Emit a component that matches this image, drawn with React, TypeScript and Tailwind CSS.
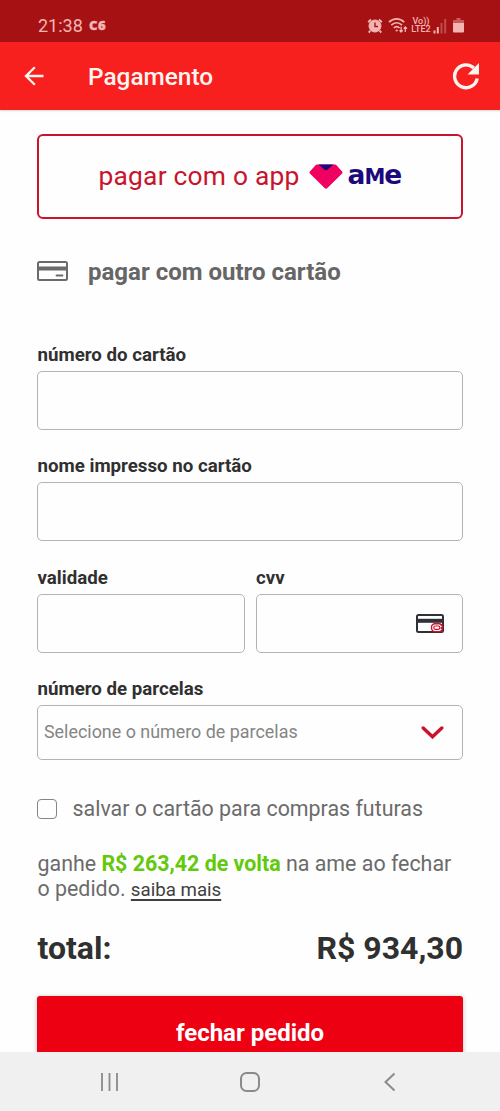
import type { ReactNode } from "react";

function StatusBar() {
  return (
    <div className="flex h-[42px] items-center bg-[#a61214] pt-[9px] pr-[36px] pl-[38px] text-[#f4b5b2]">
      <span className="w-[45px] text-[18px] leading-[22px]">21:38</span>
      <span className="mb-[2px] ml-[6px] font-['Open_Sans',sans-serif] text-[13px] leading-[20px] font-extrabold tracking-[0.500px] [-webkit-text-stroke:0.400px_#f4b5b2]">C6</span>
      <div className="ml-auto flex items-center">
        <svg className="h-4 w-4" viewBox="0 0 16 16" fill="none" stroke="currentColor">
          <circle cx="8" cy="8" r="6" fill="currentColor" />
          <path d="M1.200 4.200 4 1.500M12 1.500l2.800 2.700M3.400 12.500 1.800 14.600M12.600 12.500l1.600 2.100" strokeWidth="1.900" />
          <path d="M8 4.500V8.500H11" stroke="#a61214" strokeWidth="1.400" />
        </svg>
        <svg className="ml-[5px] h-[17px] w-5" viewBox="0 0 20 17" fill="none" stroke="currentColor" strokeWidth="1.700">
          <path d="M1 5.200C5.300.800 12 .800 16.200 5.200M3.300 8.200C6.500 5 10.800 5 14 8.200M5.800 11C7.600 9.200 9.800 9.200 11.500 11" />
          <circle cx="8.700" cy="13.500" r="1.100" fill="currentColor" stroke="none" />
          <path d="M13.100 9.800v5M11.500 13.200l1.600 1.800 1.600-1.800M17.300 15V10M15.700 11.800l1.600-1.800 1.600 1.800" strokeWidth="1.300" />
        </svg>
        <div className="mt-[-1px] ml-[3px] flex w-[20px] flex-col items-center text-[9px] leading-[8px] font-medium">
          <span>Vo))</span>
          <span>LTE2</span>
        </div>
        <svg className="ml-[2px] h-4 w-[14px]" viewBox="0 0 14 16" fill="currentColor">
          <rect x="0.500" y="12.500" width="2" height="3" />
          <rect x="3.800" y="9" width="2" height="6.500" />
          <rect x="7.500" y="5" width="2" height="10.500" opacity=".35" />
          <rect x="11.200" y="1" width="2" height="14.500" opacity=".35" />
        </svg>
        <svg className="ml-[6px] h-[15px] w-[11px]" viewBox="0 0 11 15" fill="currentColor">
          <path d="M3.500 0h4v2H11v3H0V2h3.500z" opacity=".45" />
          <path d="M0 5h11v8.500a1 1 0 0 1-1 1H1a1 1 0 0 1-1-1z" />
        </svg>
      </div>
    </div>
  );
}

function AppBar() {
  return (
    <header className="flex h-[68px] shrink-0 items-center bg-[#f81f1f] pr-[20px] pl-[24px] text-[#fff5f0] shadow-[0_1px_2px_rgba(0,0,0,0.15)]">
      <svg className="h-5 w-5" viewBox="0 0 20 20" fill="none" stroke="currentColor" strokeWidth="2.300">
        <path d="M19.500 10H2M10.800 1.200 2 10l8.800 8.800" />
      </svg>
      <h1 className="ml-[44px] pt-[2px] text-[24.400px] leading-[30px] font-medium">Pagamento</h1>
      <svg className="ml-auto h-[28px] w-[28px]" viewBox="0 0 28 28" fill="none" stroke="currentColor" strokeWidth="3.400">
        <path d="M25.200 16.500A11.400 11.400 0 1 1 21.800 6" />
        <path d="M27 1v11.500H15.500z" fill="currentColor" stroke="none" />
      </svg>
    </header>
  );
}

function AmeLogo() {
  return (
    <span className="flex items-center">
      <svg className="h-[25px] w-[34px]" viewBox="0 0 34 25">
        <path d="M8 .500h18a2 2 0 0 1 1.500.700l5.600 6.300a1.500 1.500 0 0 1 0 2L18.400 24a2 2 0 0 1-2.800 0L.900 9.500a1.500 1.500 0 0 1 0-2l5.600-6.300A2 2 0 0 1 8 .500z" fill="#f0005f" />
        <path d="M9.500.500h15l-5.800 5a2.500 2.500 0 0 1-3.400 0z" fill="#1c0a7d" />
      </svg>
      <span className="mb-px ml-[4px] flex w-[54px] items-baseline font-['DejaVu_Sans',sans-serif] text-[26.500px] leading-[30px] font-bold tracking-[-1px] text-[#1c0a7d]">
        <span>a</span>
        <span className="text-[21px] uppercase">m</span>
        <span>e</span>
      </span>
    </span>
  );
}

function Field({ label, children }: { label: string; children?: ReactNode }) {
  return (
    <label className="flex min-w-0 flex-1 flex-col">
      <span className="pl-[0.500px] text-[18.700px] leading-[22px] font-bold text-[#303030]">{label}</span>
      <span className="mt-[5px] flex h-[59px] items-center justify-end rounded-[5px] border border-[#b3b3b3] pr-[18px]">{children}</span>
    </label>
  );
}

export default function App() {
  return (
    <div className="flex h-[1111px] w-[500px] flex-col overflow-hidden bg-[#fefefe] font-[Roboto,sans-serif]">
      <StatusBar />
      <AppBar />
      <main className="flex min-h-0 flex-1 flex-col overflow-hidden px-[37px] pt-[24px]">
        <button className="flex h-[85px] shrink-0 items-center justify-center rounded-[6px] border-2 border-[#c8142c]">
          <span className="mb-[2px] text-[26.400px] leading-[30px] tracking-[0.200px] text-[#c8142c]">pagar com o app</span>
          <span className="ml-[10px]"><AmeLogo /></span>
        </button>

        <div className="mt-[38px] flex h-[30px] shrink-0 items-center">
          <svg className="mb-[3px] h-5 w-[31px]" viewBox="0 0 31 20" fill="none" stroke="#6b6b6b">
            <rect x="1" y="1" width="29" height="18" rx="1.500" strokeWidth="2" />
            <path d="M1 7.500h29" strokeWidth="4" />
            <path d="M19.500 14.500h6" strokeWidth="1.800" strokeLinecap="round" />
          </svg>
          <h2 className="ml-[20px] text-[24px] leading-[30px] font-bold text-[#666]">pagar com outro cartão</h2>
        </div>

        <form className="mt-[57px] flex shrink-0 flex-col">
          <Field label="número do cartão" />
          <div className="mt-[25px] flex"><Field label="nome impresso no cartão" /></div>
          <div className="mt-[25.500px] flex gap-[11px]">
            <Field label="validade" />
            <Field label="cvv">
              <svg className="h-[19px] w-7" viewBox="0 0 28 19" fill="none">
                <rect x="1" y="1" width="26" height="17" rx="1.500" stroke="#303038" strokeWidth="2" />
                <path d="M1 6.800h26" stroke="#303038" strokeWidth="4" />
                <rect x="15.500" y="9.800" width="11" height="7.800" rx="3.500" fill="#fff" stroke="#c8142c" strokeWidth="1.400" />
                <rect x="17.800" y="12" width="6" height="3.300" rx="1.500" stroke="#c8142c" strokeWidth="1.200" />
                <path d="M25.500 10v8" stroke="#c8142c" strokeWidth="1.800" strokeDasharray="2 1" />
              </svg>
            </Field>
          </div>
          <div className="mt-[25.500px] flex flex-col">
            <span className="pl-[0.500px] text-[18.700px] leading-[22px] font-bold text-[#303030]">número de parcelas</span>
            <div className="mt-[5px] flex h-[55px] items-center justify-between rounded-[5px] border border-[#b3b3b3] pr-[18px] pl-[6px]">
              <span className="mb-[2px] text-[17.900px] leading-[22px] text-[#858585]">Selecione o número de parcelas</span>
              <svg className="h-[13px] w-[23px]" viewBox="0 0 23 13" fill="none" stroke="#c8142c" strokeWidth="3.400" strokeLinecap="round">
                <path d="m2.200 2 9.300 8.800L20.800 2" />
              </svg>
            </div>
          </div>
        </form>

        <div className="mt-[36px] flex h-[26px] shrink-0 items-center">
          <span className="h-[20px] w-[20px] rounded-[4px] border-[1.500px] border-[#858585]" />
          <span className="ml-[15.500px] text-[21.400px] leading-[26px] text-[#6b6b6b]">salvar o cartão para compras futuras</span>
        </div>

        <p className="mt-[29px] h-[51px] shrink-0 pl-[0.500px] text-[21.400px] leading-[25px] whitespace-nowrap text-[#6b6b6b]">
          ganhe <strong className="font-bold text-[#63c90c]">R$ 263,42 de volta</strong> na ame ao fechar
          <br />
          o pedido. <span className="text-[18.700px] leading-[20px] text-[#404040] underline decoration-[1.500px] underline-offset-[3px]">saiba mais</span>
        </p>

        <div className="mt-[26px] flex h-[40px] shrink-0 items-center justify-between text-[32px] leading-[40px] font-bold text-[#303030]">
          <span className="pl-[0.500px]">total:</span>
          <span>R$ 934,30</span>
        </div>

        <button className="mt-[28px] flex h-[73px] shrink-0 items-center justify-center rounded-[3px] bg-[#ec0012] text-[24px] leading-[30px] font-bold text-white shadow-[0_1px_5px_rgba(0,0,0,0.25)]">
          fechar pedido
        </button>
      </main>
      <nav className="flex h-[59px] shrink-0 items-center justify-center gap-[120px] bg-[#f0f0f0]">
        <svg className="h-5 w-5" viewBox="0 0 20 20" stroke="#8a8a8a" strokeWidth="1.800">
          <path d="M2 1v18M9.500 1v18M17 1v18" />
        </svg>
        <svg className="h-5 w-5" viewBox="0 0 20 20" fill="none" stroke="#8a8a8a" strokeWidth="2">
          <rect x="1" y="1" width="18" height="18" rx="5.500" />
        </svg>
        <svg className="h-5 w-5" viewBox="0 0 20 20" fill="none" stroke="#8a8a8a" strokeWidth="2">
          <path d="M14.500 1.500 5.500 10l9 8.500" />
        </svg>
      </nav>
    </div>
  );
}
